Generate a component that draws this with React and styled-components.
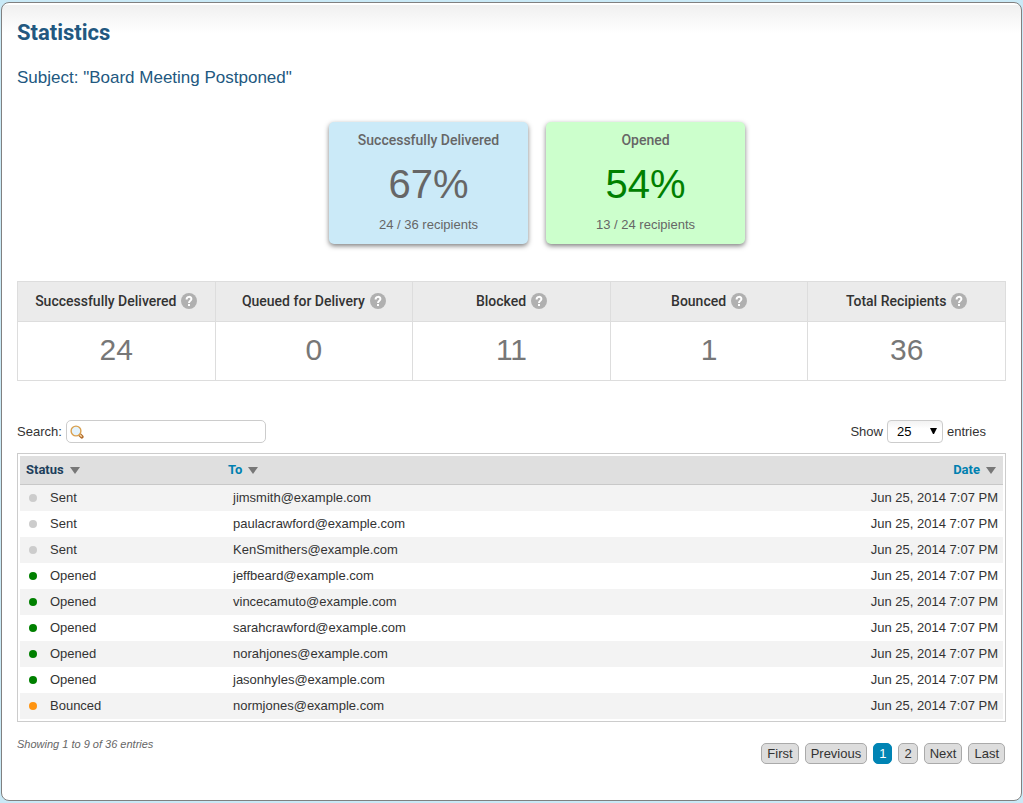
import React, { useState } from 'react';
import styled, { createGlobalStyle } from 'styled-components';

const GlobalStyle = createGlobalStyle`
  * {
    box-sizing: border-box;
  }
  body {
    margin: 0;
    padding: 2px 1px;
    background: #c9e9f6;
    color: #333333;
    font-family: 'Liberation Sans', Arial, sans-serif;
    font-size: 13px;
    line-height: 16px;
  }
`;

const Panel = styled.main`
  border: 1px solid #808080;
  border-radius: 8px;
  padding: 16px 15px 36px;
  background: linear-gradient(#f0f0f0, #ffffff 28px) 0 2px no-repeat #ffffff;
`;

const Title = styled.h1`
  margin: 0;
  color: #225880;
  font-family: Roboto, sans-serif;
  font-size: 22px;
  font-weight: 700;
  line-height: 28px;
`;

const Subject = styled.h2`
  margin: 20px 0 33px;
  color: #225880;
  font-size: 17px;
  font-weight: 400;
  line-height: 22px;
`;

const Cards = styled.section`
  display: flex;
  justify-content: center;
  gap: 18px;
  margin-left: 51px;
`;

const Card = styled.div`
  width: 199px;
  padding: 10px 0 11px;
  border-radius: 5px;
  background: ${(props) => props.$background};
  box-shadow: 0 2px 5px rgba(0, 0, 0, 0.5);
  color: #666666;
  text-align: center;
`;

const CardTitle = styled.h3`
  margin: 0;
  font-family: Roboto, sans-serif;
  font-size: 14px;
  font-weight: 500;
`;

const Percent = styled.p`
  margin: 14px 0 11px;
  color: ${(props) => props.$color};
  font-size: 40px;
  line-height: 44px;
`;

const Recipients = styled.p`
  margin: 0;
`;

const Totals = styled.table`
  width: 100%;
  margin: 37px 0 39px;
  border-collapse: collapse;
  table-layout: fixed;
  text-align: center;
  th,
  td {
    padding: 0;
    border: 1px solid #dddddd;
  }
  th {
    height: 40px;
    padding-bottom: 2px;
    background: #ebebeb;
    font-family: Roboto, sans-serif;
    font-size: 14px;
    font-weight: 500;
  }
  td {
    height: 59px;
    padding-bottom: 2px;
    color: #777777;
    font-size: 30px;
  }
`;

const TotalLabel = styled.span`
  display: flex;
  align-items: center;
  justify-content: center;
  gap: 5px;
`;

const Toolbar = styled.div`
  display: flex;
  justify-content: space-between;
  margin-bottom: 10px;
  padding-right: 20px;
`;

const Field = styled.label`
  display: flex;
  align-items: center;
  gap: 4px;
`;

const Control = styled.span`
  position: relative;
  display: flex;
`;

const SearchInput = styled.input`
  width: 200px;
  height: 23px;
  padding: 0 6px 0 22px;
  border: 1px solid #cccccc;
  border-radius: 5px;
  background: #ffffff;
  font: inherit;
`;

const SearchIcon = styled.svg`
  position: absolute;
  top: 5px;
  left: 4px;
`;

const SizeSelect = styled.select`
  width: 56px;
  height: 23px;
  padding: 0 9px;
  appearance: none;
  border: 1px solid #cccccc;
  border-radius: 4px;
  background: linear-gradient(#f2f2f2, #ffffff 8px);
  color: #000000;
  font: inherit;
`;

const SelectArrow = styled.svg`
  position: absolute;
  top: 8px;
  right: 6px;
  pointer-events: none;
`;

const ListFrame = styled.div`
  padding: 2px;
  border: 1px solid #cccccc;
`;

const List = styled.table`
  width: 100%;
  border-spacing: 0;
  th,
  td {
    padding: 5px;
    text-align: left;
  }
  th {
    height: 29px;
    padding: 0 7px 0 6px;
    border-bottom: 1px solid #c8c8c8;
    background: #dfdfdf;
  }
  td {
    height: 26px;
  }
  th:first-child {
    width: 202px;
  }
  td:nth-child(2) {
    padding-left: 11px;
  }
  th:last-child,
  td:last-child {
    text-align: right;
  }
  tbody tr:nth-child(odd) {
    background: #f3f3f3;
  }
`;

const SortButton = styled.button`
  display: inline-flex;
  align-items: center;
  gap: 6px;
  padding: 0;
  border: 0;
  background: none;
  color: ${(props) => (props.$active ? '#1e3f5c' : '#0080b0')};
  cursor: pointer;
  font-family: Roboto, sans-serif;
  font-size: 13px;
  font-weight: 700;
  line-height: 16px;
`;

const Status = styled.span`
  display: flex;
  align-items: center;
  gap: 13px;
  padding-left: 4px;
  &::before {
    content: '';
    width: 8px;
    height: 8px;
    border-radius: 50%;
    background: ${(props) => props.$color};
  }
`;

const Footer = styled.footer`
  display: flex;
  justify-content: space-between;
  padding: 14px 1px 0 0;
`;

const Showing = styled.p`
  margin: 0;
  color: #666666;
  font-size: 11px;
  font-style: italic;
`;

const Pager = styled.nav`
  display: flex;
  gap: 6px;
  margin-top: 7px;
`;

const PageButton = styled.button`
  height: 21px;
  padding: 0 5px;
  border: 1px solid ${(props) => (props.$current ? '#0084b4' : '#aaaaaa')};
  border-radius: 5px;
  background: ${(props) => (props.$current ? '#0084b4' : '#dddddd')};
  color: ${(props) => (props.$current ? '#ffffff' : '#333333')};
  cursor: pointer;
  font-family: inherit;
  font-size: 13px;
`;

const totals = [
  ['Successfully Delivered', 24],
  ['Queued for Delivery', 0],
  ['Blocked', 11],
  ['Bounced', 1],
  ['Total Recipients', 36],
];

const statusColors = {
  Sent: '#cccccc',
  Opened: '#008000',
  Bounced: '#ff9410',
};

const messages = [
  ['Sent', 'jimsmith@example.com'],
  ['Sent', 'paulacrawford@example.com'],
  ['Sent', 'KenSmithers@example.com'],
  ['Opened', 'jeffbeard@example.com'],
  ['Opened', 'vincecamuto@example.com'],
  ['Opened', 'sarahcrawford@example.com'],
  ['Opened', 'norahjones@example.com'],
  ['Opened', 'jasonhyles@example.com'],
  ['Bounced', 'normjones@example.com'],
];

const pages = ['First', 'Previous', '1', '2', 'Next', 'Last'];

const HelpIcon = () => (
  <svg width="16" height="16" viewBox="0 0 16 16" aria-hidden="true">
    <circle cx="8" cy="8" r="8" fill="#b0b0b0" />
    <path
      d="M5.6 6.4C5.6 3.1 10.4 3.1 10.4 6C10.4 7.8 8 7.7 8 9.9"
      fill="none"
      stroke="#ffffff"
      strokeWidth="2"
    />
    <rect x="7" y="11" width="2" height="2" fill="#ffffff" />
  </svg>
);

const Triangle = () => (
  <svg width="10" height="7" viewBox="0 0 10 7" aria-hidden="true">
    <path d="M0 0H10L5 7Z" fill="#777777" />
  </svg>
);

const App = () => {
  const [search, setSearch] = useState('');
  const [size, setSize] = useState('25');

  return (
    <>
      <GlobalStyle />
      <Panel>
        <Title>Statistics</Title>
        <Subject>Subject: "Board Meeting Postponed"</Subject>

        <Cards>
          <Card $background="#cbeaf8">
            <CardTitle>Successfully Delivered</CardTitle>
            <Percent $color="#666666">67%</Percent>
            <Recipients>24 / 36 recipients</Recipients>
          </Card>
          <Card $background="#ccffcc">
            <CardTitle>Opened</CardTitle>
            <Percent $color="#008000">54%</Percent>
            <Recipients>13 / 24 recipients</Recipients>
          </Card>
        </Cards>

        <Totals>
          <thead>
            <tr>
              {totals.map(([label]) => (
                <th key={label} scope="col">
                  <TotalLabel>
                    {label}
                    <HelpIcon />
                  </TotalLabel>
                </th>
              ))}
            </tr>
          </thead>
          <tbody>
            <tr>
              {totals.map(([label, count]) => (
                <td key={label}>{count}</td>
              ))}
            </tr>
          </tbody>
        </Totals>

        <Toolbar>
          <Field htmlFor="search">
            Search:
            <Control>
              <SearchInput
                id="search"
                type="text"
                value={search}
                onChange={(e) => setSearch(e.target.value)}
              />
              <SearchIcon width="14" height="14" viewBox="0 0 14 14">
                <path
                  d="M9 9L11.8 11.8"
                  stroke="#b06a2a"
                  strokeWidth="3.6"
                  strokeLinecap="round"
                />
                <path d="M9.8 9.8L11.8 11.8" stroke="#f7d9a8" strokeWidth="1.4" />
                <circle
                  cx="6"
                  cy="6"
                  r="4.9"
                  fill="#e4f3fd"
                  stroke="#d9a04f"
                  strokeWidth="1.4"
                />
              </SearchIcon>
            </Control>
          </Field>
          <Field htmlFor="size">
            Show
            <Control>
              <SizeSelect
                id="size"
                value={size}
                onChange={(e) => setSize(e.target.value)}
              >
                <option>10</option>
                <option>25</option>
                <option>50</option>
              </SizeSelect>
              <SelectArrow width="7" height="6" viewBox="0 0 7 6">
                <path d="M0 0H7L4 6H3Z" fill="#000000" />
              </SelectArrow>
            </Control>
            entries
          </Field>
        </Toolbar>

        <ListFrame>
          <List>
            <thead>
              <tr>
                {['Status', 'To', 'Date'].map((name) => (
                  <th key={name} scope="col">
                    <SortButton type="button" $active={name === 'Status'}>
                      {name}
                      <Triangle />
                    </SortButton>
                  </th>
                ))}
              </tr>
            </thead>
            <tbody>
              {messages.map(([status, to]) => (
                <tr key={to}>
                  <td>
                    <Status $color={statusColors[status]}>{status}</Status>
                  </td>
                  <td>{to}</td>
                  <td>Jun 25, 2014 7:07 PM</td>
                </tr>
              ))}
            </tbody>
          </List>
        </ListFrame>

        <Footer>
          <Showing>Showing 1 to 9 of 36 entries</Showing>
          <Pager aria-label="Pages">
            {pages.map((page) => (
              <PageButton key={page} type="button" $current={page === '1'}>
                {page}
              </PageButton>
            ))}
          </Pager>
        </Footer>
      </Panel>
    </>
  );
};

export default App;
